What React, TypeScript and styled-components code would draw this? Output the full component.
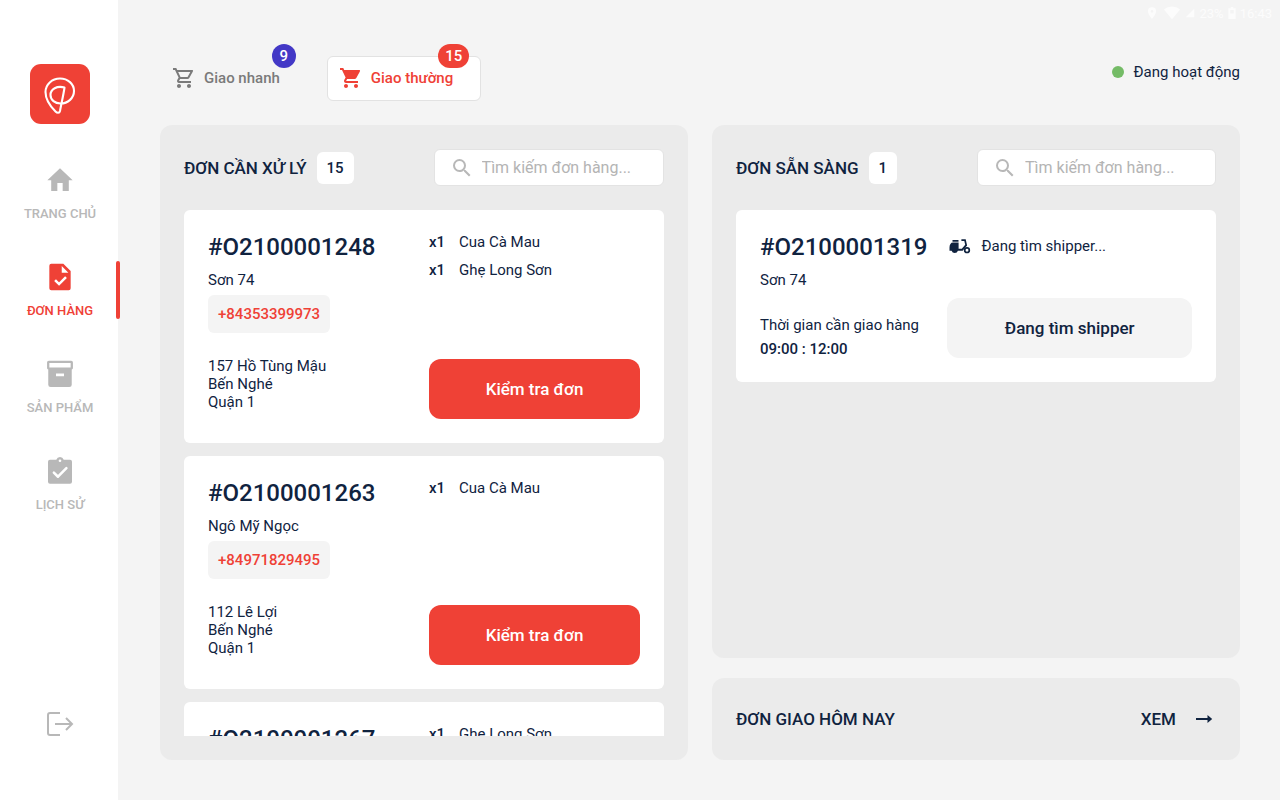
import React from 'react';
import styled, { createGlobalStyle } from 'styled-components';

const color = {
  red: '#ef4136',
  navy: '#10233f',
  page: '#f4f4f4',
  panel: '#ebebeb',
  muted: '#b8b8b8',
  gray: '#7a7a7a',
};

const GlobalStyle = createGlobalStyle`
  * { box-sizing: border-box; }
  body {
    margin: 0;
    background: ${color.page};
    color: ${color.navy};
    font-family: Roboto, 'Noto Sans', sans-serif;
    font-size: 15px;
  }
  button, input { font: inherit; color: inherit; }
  h1, h2, h3, p, ul { margin: 0; padding: 0; }
  ul { list-style: none; }
  a { color: inherit; text-decoration: none; }
`;

const Shell = styled.div`
  display: flex;
  height: 100vh;
`;

const Sidebar = styled.aside`
  flex: none;
  width: 118px;
  padding: 64px 0 62px 2px;
  display: flex;
  flex-direction: column;
  align-items: center;
  background: #fff;
`;

const Logo = styled.svg`
  flex: none;
  width: 60px;
  height: 60px;
  margin-bottom: 40px;
`;

const Nav = styled.nav`
  align-self: stretch;
  display: flex;
  flex-direction: column;
  gap: 39px;
`;

const NavLink = styled.a<{ $active?: boolean }>`
  position: relative;
  display: flex;
  flex-direction: column;
  align-items: center;
  gap: 10px;
  font-size: 13px;
  font-weight: 500;
  line-height: 16px;
  color: ${(p) => (p.$active ? color.red : color.muted)};

  svg {
    width: 32px;
    height: 32px;
  }

  &::after {
    content: '';
    display: ${(p) => (p.$active ? 'block' : 'none')};
    position: absolute;
    top: 0;
    bottom: 0;
    right: -2px;
    width: 4px;
    border-radius: 2px;
    background: ${color.red};
  }
`;

const LogoutButton = styled.button`
  margin-top: auto;
  padding: 0;
  border: 0;
  background: none;
  color: ${color.muted};
  cursor: pointer;

  svg {
    display: block;
    width: 28px;
    height: 28px;
  }
`;

const Main = styled.main`
  flex: 1;
  min-width: 0;
  display: flex;
  flex-direction: column;
  padding-bottom: 40px;
`;

const DeviceBar = styled.div`
  flex: none;
  display: flex;
  align-items: center;
  justify-content: flex-end;
  gap: 4px;
  height: 26px;
  padding-right: 8px;
  font-size: 13px;
  color: #fcfcfc;
`;

const TopRow = styled.header`
  display: flex;
  justify-content: space-between;
  align-items: flex-start;
  padding: 30px 40px 24px 42px;
`;

const Tabs = styled.div`
  display: flex;
  gap: 19px;
`;

const Tab = styled.button<{ $active?: boolean }>`
  position: relative;
  display: flex;
  align-items: center;
  gap: 8px;
  height: 45px;
  padding: 0 27px 2px 11px;
  border: 1px solid ${(p) => (p.$active ? '#e2e2e2' : 'transparent')};
  border-radius: 6px;
  background: ${(p) => (p.$active ? '#fff' : 'transparent')};
  color: ${(p) => (p.$active ? color.red : color.gray)};
  font-weight: 500;
  cursor: pointer;

  svg {
    width: 24px;
    height: 24px;
  }
`;

const TabBadge = styled.span<{ $bg: string }>`
  position: absolute;
  top: -13px;
  right: 11px;
  min-width: 24px;
  padding: 0 7px;
  border-radius: 12px;
  background: ${(p) => p.$bg};
  color: #fff;
  line-height: 24px;
  text-align: center;
`;

const Activity = styled.div`
  display: flex;
  align-items: center;
  gap: 10px;
  line-height: 32px;
`;

const Dot = styled.span`
  width: 12px;
  height: 12px;
  border-radius: 50%;
  background: #74bb66;
`;

const Board = styled.div`
  flex: 1;
  min-height: 0;
  display: grid;
  grid-template-columns: repeat(2, minmax(0, 1fr));
  gap: 24px;
  padding: 0 40px 0 42px;
`;

const Stack = styled.div`
  display: flex;
  flex-direction: column;
  gap: 20px;
  min-height: 0;
`;

const Panel = styled.section`
  flex: 1;
  min-height: 0;
  display: flex;
  flex-direction: column;
  gap: 24px;
  padding: 24px;
  border-radius: 12px;
  background: ${color.panel};
`;

const PanelHead = styled.div`
  display: flex;
  align-items: center;
  height: 37px;
  flex: none;
`;

const PanelTitle = styled.h2`
  font-size: 17px;
  font-weight: 500;
  line-height: 24px;
  white-space: nowrap;
`;

const Count = styled.span`
  margin-left: 10px;
  padding: 0 10px;
  border-radius: 6px;
  background: #fff;
  font-weight: 500;
  line-height: 32px;
`;

const Search = styled.label`
  flex: 1;
  min-width: 0;
  display: flex;
  align-items: center;
  gap: 8px;
  height: 37px;
  margin-left: 80px;
  padding: 0 10px 0 15px;
  border: 1px solid #e3e3e3;
  border-radius: 6px;
  background: #fff;

  svg {
    flex: none;
    width: 24px;
    height: 24px;
    color: ${color.muted};
  }

  input {
    flex: 1;
    min-width: 0;
    width: 100%;
    padding: 0;
    border: 0;
    outline: 0;
    background: none;
    font-size: 16px;
  }

  input::placeholder {
    color: #b4b4b4;
    opacity: 1;
  }
`;

const CardList = styled.div`
  flex: 1;
  min-height: 0;
  display: flex;
  flex-direction: column;
  gap: 13px;
  overflow: hidden;
`;

const Card = styled.article<{ $columns: string; $gap: number }>`
  flex: none;
  display: grid;
  grid-template-columns: ${(p) => p.$columns};
  gap: ${(p) => p.$gap}px;
  padding: 24px;
  border-radius: 6px;
  background: #fff;
`;

const OrderId = styled.h3`
  font-size: 24px;
  font-weight: 500;
  line-height: 26px;
`;

const Customer = styled.p`
  margin-top: 10px;
  line-height: 20px;
`;

const Phone = styled.a`
  display: inline-block;
  margin-top: 5px;
  padding: 0 10px;
  border-radius: 6px;
  background: ${color.page};
  color: ${color.red};
  font-weight: 500;
  line-height: 38px;
`;

const Address = styled.address`
  margin-top: 24px;
  min-height: 62px;
  font-style: normal;
  line-height: 18px;

  span {
    display: block;
  }
`;

const CardSide = styled.div`
  display: flex;
  flex-direction: column;
  justify-content: space-between;
`;

const Items = styled.ul`
  display: flex;
  flex-direction: column;
  gap: 12px;
  line-height: 16px;

  li {
    display: flex;
  }

  b {
    width: 30px;
    font-weight: 500;
  }
`;

const Action = styled.button<{ $quiet?: boolean }>`
  height: 60px;
  border: 0;
  border-radius: 12px;
  background: ${(p) => (p.$quiet ? color.page : color.red)};
  color: ${(p) => (p.$quiet ? color.navy : '#fff')};
  font-size: 17px;
  font-weight: 500;
  cursor: pointer;
`;

const DeliveryTime = styled.p`
  display: flex;
  flex-direction: column;
  gap: 6px;
  margin-top: 26px;
  line-height: 18px;

  b {
    font-weight: 500;
  }
`;

const ShipperState = styled.p`
  display: flex;
  align-items: center;
  gap: 10px;
  padding-left: 2px;
  line-height: 24px;

  svg {
    width: 22px;
    height: 16px;
  }
`;

const TodayPanel = styled.section`
  flex: none;
  display: flex;
  align-items: center;
  justify-content: space-between;
  height: 82px;
  padding: 0 24px;
  border-radius: 12px;
  background: ${color.panel};
`;

const ViewLink = styled.a`
  display: flex;
  align-items: center;
  gap: 16px;
  font-size: 17px;
  font-weight: 500;

  svg {
    width: 24px;
    height: 24px;
  }
`;

const HomeIcon = () => (
  <svg viewBox="0 0 24 24" fill="currentColor" aria-hidden="true">
    <path d="M10 20.2v-6h4v6h4.6v-8.1h2.9L12 3.2l-9.5 8.9h2.9v8.1z" />
  </svg>
);

const FileCheckIcon = () => (
  <svg viewBox="0 0 24 24" fill="currentColor" aria-hidden="true">
    <path
      fillRule="evenodd"
      d="M5.500 2h9L20 7.500V20.500a1.500 1.500 0 0 1-1.500 1.500h-13A1.500 1.500 0 0 1 4 20.500v-17A1.500 1.500 0 0 1 5.500 2zM13.300 3.800v5h5z"
    />
    <path d="M8.300 14.300l3 3 5.200-5.200" fill="none" stroke="#fff" strokeWidth="1.900" />
  </svg>
);

const ArchiveIcon = () => (
  <svg viewBox="0 0 24 24" fill="currentColor" aria-hidden="true">
    <path
      fillRule="evenodd"
      d="M3.600 2h16.800c.7 0 1.300.6 1.300 1.300v4.200c0 .6-.4 1-.9 1.200V20a1.800 1.800 0 0 1-1.800 1.800H5A1.800 1.800 0 0 1 3.200 20V8.700c-.5-.2-.9-.6-.9-1.200V3.300C2.300 2.600 2.900 2 3.600 2zM4 3.700v3.500h16V3.700zM9 11.700v2h6v-2z"
    />
  </svg>
);

const ClipboardCheckIcon = () => (
  <svg viewBox="0 0 24 24" fill="currentColor" aria-hidden="true">
    <path
      fillRule="evenodd"
      d="M19.500 3.500h-4.700a3 3 0 0 0-5.600 0H4.500A1.500 1.500 0 0 0 3 5v15a1.500 1.500 0 0 0 1.500 1.500h15A1.500 1.500 0 0 0 21 20V5a1.500 1.500 0 0 0-1.500-1.500zm-7.500-.2a1 1 0 1 1 0 2 1 1 0 0 1 0-2z"
    />
    <path
      d="M7.400 13.200l3.100 3.100 6.300-6.500"
      fill="none"
      stroke="#fff"
      strokeWidth="1.900"
      strokeLinecap="round"
      strokeLinejoin="round"
    />
  </svg>
);

const LogoutIcon = () => (
  <svg viewBox="0 0 28 28" fill="none" stroke="currentColor" strokeWidth="2" aria-hidden="true">
    <path d="M14 3H4a2 2 0 0 0-2 2v18a2 2 0 0 0 2 2h10M9 14h17M20 8l6 6-6 6" />
  </svg>
);

const CartIcon = ({ filled }: { filled?: boolean }) => (
  <svg viewBox="0 0 24 24" fill="currentColor" aria-hidden="true">
    {filled ? (
      <path d="M7 18c-1.100 0-1.990.9-1.990 2S5.900 22 7 22s2-.9 2-2-.9-2-2-2zM1 2v2h2l3.600 7.590-1.350 2.450c-.16.280-.25.610-.25.960 0 1.100.9 2 2 2h12v-2H7.420c-.14 0-.25-.11-.25-.25l.03-.12.900-1.630h7.450c.75 0 1.410-.41 1.750-1.030l3.580-6.490A1 1 0 0 0 20 4H5.210l-.94-2H1zm16 16c-1.100 0-1.990.9-1.990 2s.89 2 1.990 2 2-.9 2-2-.9-2-2-2z" />
    ) : (
      <path d="M15.550 13c.75 0 1.410-.41 1.750-1.030l3.580-6.490A.996.996 0 0 0 20.010 4H5.210l-.94-2H1v2h2l3.600 7.590-1.350 2.440C4.520 15.370 5.480 17 7 17h12v-2H7l1.100-2h7.450zM6.160 6h12.150l-2.760 5H8.530L6.160 6zM7 18c-1.100 0-1.990.9-1.990 2S5.900 22 7 22s2-.9 2-2-.9-2-2-2zm10 0c-1.100 0-1.990.9-1.990 2s.89 2 1.990 2 2-.9 2-2-.9-2-2-2z" />
    )}
  </svg>
);

const SearchIcon = () => (
  <svg viewBox="0 0 24 24" fill="currentColor" aria-hidden="true">
    <path d="M15.500 14h-.79l-.28-.27A6.471 6.471 0 0 0 16 9.500 6.500 6.500 0 1 0 9.500 16c1.610 0 3.090-.59 4.230-1.570l.27.280v.79l5 4.990L20.490 19l-4.990-5zm-6 0C7.010 14 5 11.990 5 9.500S7.010 5 9.500 5 14 7.010 14 9.500 11.990 14 9.500 14z" />
  </svg>
);

const MopedIcon = () => (
  <svg viewBox="0 0 22 16" fill="currentColor" aria-hidden="true">
    <path d="M3.500 2h6v1.800h-6zM4 4.500h5.600v6.200h3.200l3.400-4L15.300 3h-2.900V1.300h4.300l1.400 6.200-4.500 5.200H8.900a3.300 3.300 0 0 1-6.300 0H.500V9.500C.500 6.500 1.800 4.500 4 4.500z" />
    <circle cx="18" cy="12.200" r="2.300" fill="none" stroke="currentColor" strokeWidth="1.700" />
  </svg>
);

const ArrowIcon = () => (
  <svg viewBox="0 0 24 24" fill="currentColor" aria-hidden="true">
    <path d="M4 11h11.500V8l4.700 4-4.700 4v-3H4z" />
  </svg>
);

const PinIcon = () => (
  <svg width="14" height="14" viewBox="0 0 24 24" fill="currentColor" aria-hidden="true">
    <path
      fillRule="evenodd"
      d="M12 2a7 7 0 0 0-7 7c0 5.200 7 13 7 13s7-7.800 7-13a7 7 0 0 0-7-7zm0 5a2.200 2.200 0 1 1 0 4.400A2.200 2.200 0 0 1 12 7z"
    />
  </svg>
);

const WifiIcon = () => (
  <svg width="18" height="14" viewBox="0 0 24 20" fill="currentColor" aria-hidden="true">
    <path d="M12 19L.500 5a18 18 0 0 1 23 0z" />
  </svg>
);

const SignalIcon = () => (
  <svg width="10" height="10" viewBox="0 0 24 24" fill="currentColor" aria-hidden="true">
    <path d="M2 22h20V2z" />
  </svg>
);

const BatteryIcon = () => (
  <svg width="8" height="12" viewBox="0 0 12 20" fill="currentColor" aria-hidden="true">
    <path fillRule="evenodd" d="M4 0h4v2h4v18H0V2h4zM3 5v6h6V5z" />
  </svg>
);

const navItems = [
  { label: 'TRANG CHỦ', icon: <HomeIcon /> },
  { label: 'ĐƠN HÀNG', icon: <FileCheckIcon />, active: true },
  { label: 'SẢN PHẨM', icon: <ArchiveIcon /> },
  { label: 'LỊCH SỬ', icon: <ClipboardCheckIcon /> },
];

interface Order {
  id: string;
  customer: string;
  phone: string;
  address: string[];
  items: string[];
}

const orders: Order[] = [
  {
    id: '#O2100001248',
    customer: 'Sơn 74',
    phone: '+84353399973',
    address: ['157 Hồ Tùng Mậu', 'Bến Nghé', 'Quận 1'],
    items: ['Cua Cà Mau', 'Ghẹ Long Sơn'],
  },
  {
    id: '#O2100001263',
    customer: 'Ngô Mỹ Ngọc',
    phone: '+84971829495',
    address: ['112 Lê Lợi', 'Bến Nghé', 'Quận 1'],
    items: ['Cua Cà Mau'],
  },
  {
    id: '#O2100001267',
    customer: '',
    phone: '',
    address: [],
    items: ['Ghẹ Long Sơn'],
  },
];

const SearchBox = () => (
  <Search>
    <SearchIcon />
    <input type="text" placeholder="Tìm kiếm đơn hàng..." aria-label="Tìm kiếm đơn hàng" />
  </Search>
);

const PendingCard = ({ order }: { order: Order }) => (
  <Card $columns="1fr 1fr" $gap={10}>
    <div>
      <OrderId>{order.id}</OrderId>
      {order.customer && <Customer>{order.customer}</Customer>}
      {order.phone && <Phone href={`tel:${order.phone}`}>{order.phone}</Phone>}
      {order.address.length > 0 && (
        <Address>
          {order.address.map((line) => (
            <span key={line}>{line}</span>
          ))}
        </Address>
      )}
    </div>
    <CardSide>
      <Items>
        {order.items.map((item) => (
          <li key={item}>
            <b>x1</b>
            {item}
          </li>
        ))}
      </Items>
      {order.phone && <Action type="button">Kiểm tra đơn</Action>}
    </CardSide>
  </Card>
);

export default function App() {
  return (
    <>
      <GlobalStyle />
      <Shell>
        <Sidebar>
          <Logo viewBox="0 0 60 60" role="img">
            <rect width="60" height="60" rx="11" fill={color.red} />
            <path
              d="M34.500 23.500C27 21.500 20.500 25 20.500 31c0 5 4.500 8.500 10 8.500C38 39.500 44 34 44 27c0-7-6-12.500-14-12.500S15.500 20.500 15.500 28C15.500 37 21 43 25.500 47.500c1.500 1.500 4 2 4.500-.5C31 41 33.500 31 34.500 23.500z"
              fill="none"
              stroke="#fff"
              strokeWidth="2.100"
              strokeLinejoin="round"
            />
          </Logo>
          <Nav>
            {navItems.map((item) => (
              <NavLink
                key={item.label}
                href="#"
                $active={item.active}
                aria-current={item.active ? 'page' : undefined}
              >
                {item.icon}
                {item.label}
              </NavLink>
            ))}
          </Nav>
          <LogoutButton type="button">
            <LogoutIcon />
          </LogoutButton>
        </Sidebar>
        <Main>
          <DeviceBar>
            <PinIcon />
            <WifiIcon />
            <SignalIcon />
            <span>23%</span>
            <BatteryIcon />
            <span>16:43</span>
          </DeviceBar>
          <TopRow>
            <Tabs>
              <Tab type="button">
                <CartIcon />
                Giao nhanh
                <TabBadge $bg="#4338c6">9</TabBadge>
              </Tab>
              <Tab type="button" $active>
                <CartIcon filled />
                Giao thường
                <TabBadge $bg={color.red}>15</TabBadge>
              </Tab>
            </Tabs>
            <Activity>
              <Dot />
              Đang hoạt động
            </Activity>
          </TopRow>
          <Board>
            <Panel>
              <PanelHead>
                <PanelTitle>ĐƠN CẦN XỬ LÝ</PanelTitle>
                <Count>15</Count>
                <SearchBox />
              </PanelHead>
              <CardList>
                {orders.map((order) => (
                  <PendingCard key={order.id} order={order} />
                ))}
              </CardList>
            </Panel>
            <Stack>
              <Panel>
                <PanelHead>
                  <PanelTitle>ĐƠN SẴN SÀNG</PanelTitle>
                  <Count>1</Count>
                  <SearchBox />
                </PanelHead>
                <CardList>
                  <Card $columns="auto 1fr" $gap={20}>
                    <div>
                      <OrderId>#O2100001319</OrderId>
                      <Customer>Sơn 74</Customer>
                      <DeliveryTime>
                        <span>Thời gian cần giao hàng</span>
                        <b>09:00 : 12:00</b>
                      </DeliveryTime>
                    </div>
                    <CardSide>
                      <ShipperState>
                        <MopedIcon />
                        Đang tìm shipper...
                      </ShipperState>
                      <Action type="button" $quiet>
                        Đang tìm shipper
                      </Action>
                    </CardSide>
                  </Card>
                </CardList>
              </Panel>
              <TodayPanel>
                <PanelTitle>ĐƠN GIAO HÔM NAY</PanelTitle>
                <ViewLink href="#">
                  XEM
                  <ArrowIcon />
                </ViewLink>
              </TodayPanel>
            </Stack>
          </Board>
        </Main>
      </Shell>
    </>
  );
}
